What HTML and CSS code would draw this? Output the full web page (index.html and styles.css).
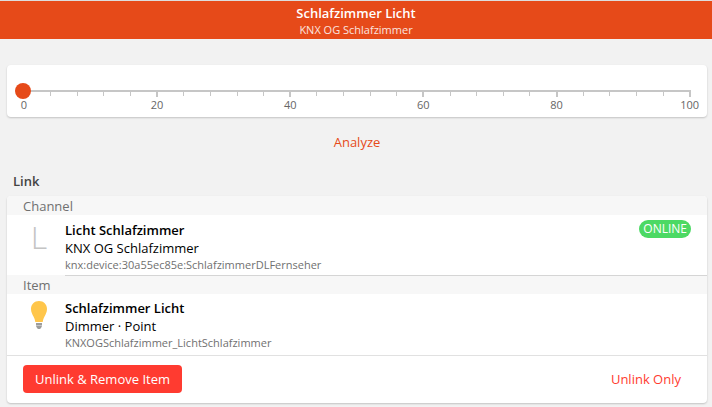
FILE: index.html
```
<!DOCTYPE html>
<html lang="en">
<head>
<meta charset="utf-8">
<meta name="viewport" content="width=device-width, initial-scale=1">
<title>Schlafzimmer Licht</title>
<link rel="stylesheet" href="styles.css">
</head>
<body>
<header class="navbar">
  <h1 class="navbar-title">Schlafzimmer Licht</h1>
  <p class="navbar-subtitle">KNX OG Schlafzimmer</p>
</header>
<main class="page">
  <section class="card slider-card">
    <input class="slider" type="range" min="0" max="100" value="0" aria-label="Schlafzimmer Licht">
    <ol class="scale" aria-hidden="true">
      <li class="tick major"><span>0</span></li>
      <li class="tick"></li><li class="tick"></li><li class="tick"></li><li class="tick"></li>
      <li class="tick major"><span>20</span></li>
      <li class="tick"></li><li class="tick"></li><li class="tick"></li><li class="tick"></li>
      <li class="tick major"><span>40</span></li>
      <li class="tick"></li><li class="tick"></li><li class="tick"></li><li class="tick"></li>
      <li class="tick major"><span>60</span></li>
      <li class="tick"></li><li class="tick"></li><li class="tick"></li><li class="tick"></li>
      <li class="tick major"><span>80</span></li>
      <li class="tick"></li><li class="tick"></li><li class="tick"></li><li class="tick"></li>
      <li class="tick major"><span>100</span></li>
    </ol>
  </section>
  <a class="analyze" href="#analyze">Analyze</a>
  <h2 class="block-title">Link</h2>
  <section class="card">
    <h3 class="group-title">Channel</h3>
    <article class="entry">
      <div class="entry-media letter" aria-hidden="true">L</div>
      <div class="entry-body ruled">
        <div class="entry-text">
          <h4 class="entry-title">Licht Schlafzimmer</h4>
          <p class="entry-subtitle">KNX OG Schlafzimmer</p>
          <p class="entry-id">knx:device:30a55ec85e:SchlafzimmerDLFernseher</p>
        </div>
        <span class="badge">ONLINE</span>
      </div>
    </article>
    <h3 class="group-title">Item</h3>
    <article class="entry">
      <div class="entry-media">
        <svg class="bulb" viewBox="0 0 16 28" width="16" height="28" aria-hidden="true">
          <path fill="#ffc64b" d="M8 0C3.4 0 0 3.5 0 8c0 3.200 1.300 5.200 2.600 7.700C3.700 17.700 4 19.300 4.300 21h7.400c.3-1.700.6-3.300 1.700-5.300C14.700 13.200 16 11.200 16 8c0-4.500-3.400-8-8-8z"/>
          <path fill="#9c9c9c" d="M5 22h6v2H5z"/>
          <path fill="#c5c5c5" d="M5 24h6v1H5z"/>
          <path fill="#9c9c9c" d="M5 25h6l-1 2-1 1H7l-1-1z"/>
        </svg>
      </div>
      <div class="entry-body">
        <div class="entry-text">
          <h4 class="entry-title">Schlafzimmer Licht</h4>
          <p class="entry-subtitle">Dimmer · Point</p>
          <p class="entry-id">KNXOGSchlafzimmer_LichtSchlafzimmer</p>
        </div>
      </div>
    </article>
    <footer class="actions">
      <button class="button filled" type="button">Unlink &amp; Remove Item</button>
      <button class="button" type="button">Unlink Only</button>
    </footer>
  </section>
</main>
</body>
</html>
```
FILE: styles.css
```
* { box-sizing: border-box; }

body {
  margin: 0;
  background: #f2f2f2;
  color: #000;
  font: 13px/18px "Open Sans", "Noto Sans", sans-serif;
}

h1, h2, h3, h4, p, ol { margin: 0; padding: 0; }
h1, h2, h4 { font-size: 13px; font-weight: 600; }

.navbar {
  padding: 3px 0 2px;
  border-top: 1px solid #ddd;
  background: #e64a19;
  color: #fff;
  text-align: center;
}
.navbar-subtitle { font-size: 11px; line-height: 15px; opacity: .85; }

.page {
  display: flex;
  flex-direction: column;
  padding: 26px 5px 4px 7px;
}

.card {
  overflow: hidden;
  border-radius: 4px;
  background: #fff;
  box-shadow: 0 1px 2px rgba(0, 0, 0, .2);
}

.slider-card { padding: 18px 8px 5px; }

.slider {
  display: block;
  position: relative;
  z-index: 1;
  width: 100%;
  height: 16px;
  margin: 0;
  background: none;
  appearance: none;
}
.slider::-webkit-slider-runnable-track {
  height: 16px;
  background: linear-gradient(#c6c6c6, #c6c6c6) center / calc(100% - 16px) 2px no-repeat;
}
.slider::-webkit-slider-thumb {
  width: 16px;
  height: 16px;
  border-radius: 50%;
  background: #e64a19;
  appearance: none;
}

.scale {
  display: flex;
  justify-content: space-between;
  margin: -7px 9px 0;
  color: #666;
  font-size: 11px;
  line-height: 15px;
  list-style: none;
}
.tick {
  display: flex;
  flex-direction: column;
  align-items: center;
  width: 0;
}
.tick::before {
  flex: none;
  width: 1px;
  height: 4px;
  background: #c6c6c6;
  content: "";
}
.tick.major::before { width: 2px; height: 5px; }

.analyze {
  align-self: center;
  margin-top: 16px;
  color: #e64a19;
  text-decoration: none;
}

.block-title { margin: 21px 6px 6px; color: #444; }

.group-title {
  padding: 1px 16px 0;
  background: #f7f7f7;
  color: #707070;
  font-size: 13px;
  font-weight: 400;
}

.entry { display: flex; padding-left: 16px; }
.entry-media {
  flex: none;
  width: 32px;
  margin-right: 10px;
  padding-top: 7px;
  text-align: center;
}
.letter {
  color: #c4c4c4;
  font-size: 32px;
  font-weight: 300;
  line-height: 30px;
}
.bulb { display: block; margin: 0 auto; }

.entry-body {
  display: flex;
  flex: 1;
  justify-content: space-between;
  align-items: flex-start;
  min-width: 0;
  padding: 5px 16px 4px 0;
}
/* The rule is drawn on top of the following group title. */
.ruled {
  position: relative;
  margin-bottom: -1px;
  padding-top: 6px;
  padding-bottom: 2px;
  border-bottom: 1px solid #d5d5d5;
}
.entry-text { min-width: 0; }
.entry-id { color: #707070; font-size: 11px; line-height: 16px; }

.badge {
  margin-top: -1px;
  padding: 0 4px;
  border-radius: 9px;
  background: #4cd964;
  color: #fff;
  font-size: 12px;
}

.actions {
  display: flex;
  justify-content: space-between;
  padding: 9px 16px 10px;
  border-top: 1px solid #e1e1e1;
}
.button {
  height: 28px;
  padding: 0 10px;
  border: 0;
  border-radius: 4px;
  background: none;
  color: #ff3b30;
  font: inherit;
}
.filled { padding: 0 12px; background: #ff3b30; color: #fff; }
```
